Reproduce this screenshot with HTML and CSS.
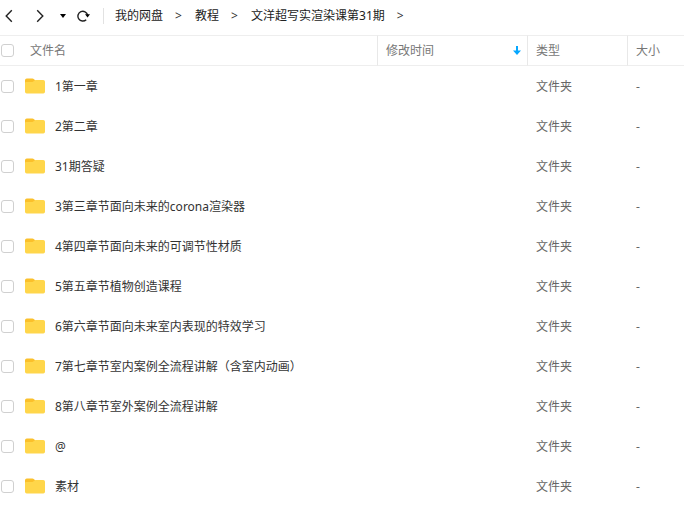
FILE: index.html
```
<!DOCTYPE html>
<html lang="zh-CN">
<head>
  <meta charset="UTF-8" />
  <meta name="viewport" content="width=device-width, initial-scale=1.0"/>
  <title>我的网盘</title>
  <link rel="stylesheet" href="styles.css">
</head>
<body>
  <svg class="sprite" aria-hidden="true">
    <symbol id="folder" viewBox="0 0 20 16">
      <path fill="#fbc02a" d="M0 2.2Q0 .5 1.7.5H7.4Q8.4.5 9 1.2L10.2 2.3V8H0Z"/>
      <path fill="#ffd64a" d="M0 4.9Q0 3.9 1 3.9H7.2Q8 3.9 8.6 3.3L9.2 2.7Q9.8 2 10.8 2H18.3Q20 2 20 3.7V13.8Q20 15.5 18.3 15.5H1.7Q0 15.5 0 13.8Z"/>
    </symbol>
  </svg>

  <header class="toolbar">
    <div class="nav-buttons">
      <button class="nav-button" aria-label="后退">
        <svg width="8" height="14" viewBox="0 0 8 14"><path class="stroke" d="M6.8 1.3L1.2 7l5.6 5.7"/></svg>
      </button>
      <button class="nav-button" aria-label="前进">
        <svg width="8" height="14" viewBox="0 0 8 14"><path class="stroke" d="M1.2 1.3L6.8 7l-5.6 5.7"/></svg>
      </button>
      <button class="nav-button" aria-label="历史记录">
        <svg width="6" height="4" viewBox="0 0 6 4"><path d="M0 0h6L3 4z"/></svg>
      </button>
      <button class="nav-button" aria-label="刷新">
        <svg width="13" height="12" viewBox="0 0 13 12"><path class="stroke" d="M9.2 9.7A4.9 4.9 0 1 1 10.6 5"/><path d="M8 4.2h5L10.6 7.4z"/></svg>
      </button>
    </div>
    <nav class="breadcrumb" aria-label="路径">
      <a href="#">我的网盘</a>
      <span>&gt;</span>
      <a href="#">教程</a>
      <span>&gt;</span>
      <a href="#">文洋超写实渲染课第31期</a>
      <span>&gt;</span>
    </nav>
  </header>

  <table class="file-table">
    <colgroup>
      <col class="col-check">
      <col class="col-name">
      <col class="col-time">
      <col class="col-type">
      <col class="col-size">
    </colgroup>
    <thead>
      <tr>
        <th class="check"><input type="checkbox" aria-label="全选"></th>
        <th class="head-name">文件名</th>
        <th class="divided head-time">
          <button class="sort">
            修改时间
            <svg width="8" height="9" viewBox="0 0 8 9"><path d="M3 0h2v4.5h3L4 9 0 4.5h3z"/></svg>
          </button>
        </th>
        <th class="divided">类型</th>
        <th class="divided">大小</th>
      </tr>
    </thead>
    <tbody>
      <tr>
        <td class="check"><input type="checkbox" id="file-1"></td>
        <td class="name"><label class="file" for="file-1"><svg class="folder"><use href="#folder"/></svg>1第一章</label></td>
        <td></td><td>文件夹</td><td>-</td>
      </tr>
      <tr>
        <td class="check"><input type="checkbox" id="file-2"></td>
        <td class="name"><label class="file" for="file-2"><svg class="folder"><use href="#folder"/></svg>2第二章</label></td>
        <td></td><td>文件夹</td><td>-</td>
      </tr>
      <tr>
        <td class="check"><input type="checkbox" id="file-3"></td>
        <td class="name"><label class="file" for="file-3"><svg class="folder"><use href="#folder"/></svg>31期答疑</label></td>
        <td></td><td>文件夹</td><td>-</td>
      </tr>
      <tr>
        <td class="check"><input type="checkbox" id="file-4"></td>
        <td class="name"><label class="file" for="file-4"><svg class="folder"><use href="#folder"/></svg>3第三章节面向未来的corona渲染器</label></td>
        <td></td><td>文件夹</td><td>-</td>
      </tr>
      <tr>
        <td class="check"><input type="checkbox" id="file-5"></td>
        <td class="name"><label class="file" for="file-5"><svg class="folder"><use href="#folder"/></svg>4第四章节面向未来的可调节性材质</label></td>
        <td></td><td>文件夹</td><td>-</td>
      </tr>
      <tr>
        <td class="check"><input type="checkbox" id="file-6"></td>
        <td class="name"><label class="file" for="file-6"><svg class="folder"><use href="#folder"/></svg>5第五章节植物创造课程</label></td>
        <td></td><td>文件夹</td><td>-</td>
      </tr>
      <tr>
        <td class="check"><input type="checkbox" id="file-7"></td>
        <td class="name"><label class="file" for="file-7"><svg class="folder"><use href="#folder"/></svg>6第六章节面向未来室内表现的特效学习</label></td>
        <td></td><td>文件夹</td><td>-</td>
      </tr>
      <tr>
        <td class="check"><input type="checkbox" id="file-8"></td>
        <td class="name"><label class="file" for="file-8"><svg class="folder"><use href="#folder"/></svg>7第七章节室内案例全流程讲解（含室内动画）</label></td>
        <td></td><td>文件夹</td><td>-</td>
      </tr>
      <tr>
        <td class="check"><input type="checkbox" id="file-9"></td>
        <td class="name"><label class="file" for="file-9"><svg class="folder"><use href="#folder"/></svg>8第八章节室外案例全流程讲解</label></td>
        <td></td><td>文件夹</td><td>-</td>
      </tr>
      <tr>
        <td class="check"><input type="checkbox" id="file-10"></td>
        <td class="name"><label class="file" for="file-10"><svg class="folder"><use href="#folder"/></svg>@</label></td>
        <td></td><td>文件夹</td><td>-</td>
      </tr>
      <tr>
        <td class="check"><input type="checkbox" id="file-11"></td>
        <td class="name"><label class="file" for="file-11"><svg class="folder"><use href="#folder"/></svg>素材</label></td>
        <td></td><td>文件夹</td><td>-</td>
      </tr>
    </tbody>
  </table>
</body>
</html>
```
FILE: styles.css
```
* {
  box-sizing: border-box;
}

body {
  font-family: 'Noto Sans', 'Noto Sans CJK SC', sans-serif;
  font-size: 12px;
  line-height: 20px;
  background-color: #fff;
  color: #333;
  margin: 0;
}

button {
  font: inherit;
  color: inherit;
  background: none;
  border: none;
  padding: 0;
  cursor: pointer;
}

svg {
  display: block;
}

.sprite {
  display: none;
}

.toolbar {
  display: flex;
  align-items: center;
  height: 35px;
  padding: 0 5px 4px;
}

.nav-buttons {
  display: flex;
  align-items: center;
  height: 16px;
  padding-right: 13px;
  border-right: 1px solid #e2e2e2;
}

.nav-button + .nav-button {
  margin-left: 11px;
}

.nav-button:nth-child(2) {
  margin-left: 23px;
  margin-right: 5px;
}

.stroke {
  fill: none;
  stroke: #222;
  stroke-width: 1.4;
}

.breadcrumb {
  display: flex;
  gap: 12px;
  padding-left: 11px;
  white-space: nowrap;
}

.breadcrumb a {
  color: #222;
  text-decoration: none;
}

.breadcrumb span {
  width: 8px;
}

.file-table {
  width: 100%;
  table-layout: fixed;
  border-collapse: separate;
  border-spacing: 0;
}

.col-check {
  width: 25px;
}

.col-time {
  width: 150px;
}

.col-type {
  width: 100px;
}

.col-size {
  width: 57px;
}

.file-table th {
  height: 31px;
  padding: 0 8px;
  border-top: 1px solid #eee;
  border-bottom: 1px solid #eee;
  color: #777;
  font-weight: 400;
  text-align: left;
}

.file-table .divided {
  border-left: 1px solid #e8e8e8;
}

.file-table .head-name {
  padding-left: 5px;
}

.file-table .head-time {
  padding-right: 6px;
}

.file-table td {
  height: 40px;
  padding: 2px 9px 0;
  color: #666;
}

.file-table .check {
  padding: 0 0 0 1px;
}

.file-table .name {
  padding: 2px 0 0;
}

input[type="checkbox"] {
  appearance: none;
  display: block;
  width: 13px;
  height: 13px;
  margin: 0;
  border: 1px solid #d0d0d0;
  border-radius: 3px;
  background-color: #fff;
}

input[type="checkbox"]:checked {
  background-color: #06a7ff;
  border-color: #06a7ff;
}

.sort {
  display: flex;
  align-items: center;
  justify-content: space-between;
  width: 100%;
}

.sort svg {
  fill: #06a7ff;
}

.file {
  display: flex;
  align-items: center;
  gap: 10px;
  color: #333;
  white-space: nowrap;
}

.folder {
  width: 20px;
  height: 16px;
  margin-bottom: 2px;
}
```
